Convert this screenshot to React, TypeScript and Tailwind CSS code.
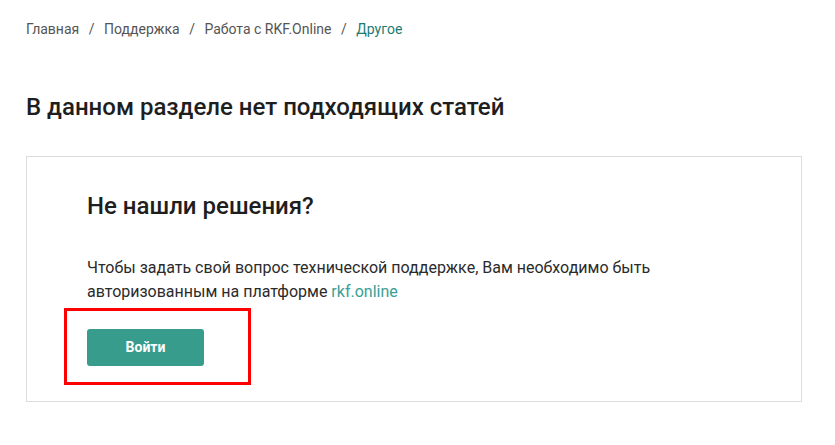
import React from 'react';

const crumbs = ['Главная', 'Поддержка', 'Работа с RKF.Online'];

const App = () => {
  return (
    <div className="min-h-[445px] w-[835px] bg-white font-['Roboto',sans-serif] text-[#222]">
      <div className="px-[26px] pt-[19px]">
        <nav className="flex items-center text-[14px] leading-[20px] text-[#555]">
          {crumbs.map((c) => (
            <React.Fragment key={c}>
              <span>{c}</span>
              <span className="px-[9.5px]">/</span>
            </React.Fragment>
          ))}
          <span className="text-[#1d7b72]">Другое</span>
        </nav>
        <h1 className="mt-[52px] text-[24px] font-medium leading-[32px] text-[#1e1e1e]">
          В данном разделе нет подходящих статей
        </h1>
        <section className="relative mt-[33px] h-[246px] w-[776px] border border-[#dcdcdc] px-[60px] pt-[33px]">
          <h2 className="text-[24px] font-medium leading-[32px] text-[#1e1e1e]">Не нашли решения?</h2>
          <p className="mt-[34px] text-[16px] leading-[24px] text-[#2b2b2b]">
            Чтобы задать свой вопрос технической поддержке, Вам необходимо быть
            <br />
            авторизованным на платформе <span className="text-[#3a9e94]">rkf.online</span>
          </p>
          <button className="mt-[25px] h-[37px] w-[117px] rounded-[3px] bg-[#379c8b] text-[14px] font-bold text-white">
            Войти
          </button>
          <div className="pointer-events-none absolute left-[37px] top-[151px] h-[77px] w-[187px] border-[3px] border-[#ff0000]" />
        </section>
      </div>
    </div>
  );
};

export default App;
